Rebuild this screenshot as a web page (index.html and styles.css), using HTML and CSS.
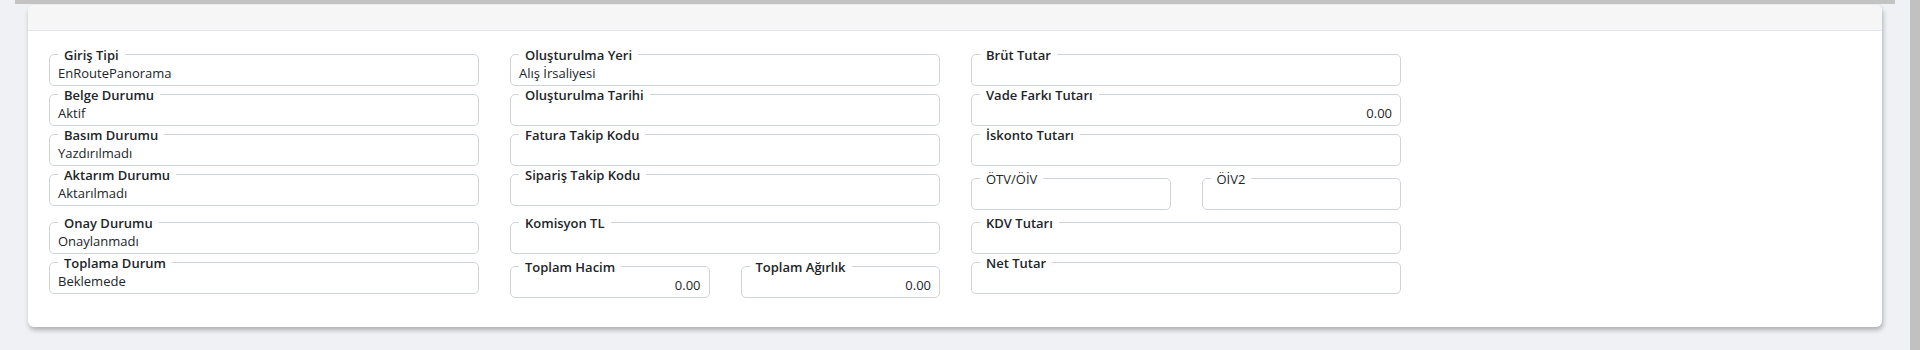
FILE: index.html
```html
<!DOCTYPE html>
<html>
<head>
  <title>Belge Bilgileri</title>
  <link rel="stylesheet" href="styles.css">
</head>
<body>
  <div class="page">
    <div class="top-bar"></div>

    <div class="card">
      <div class="card-header"></div>
      <div class="card-body">
        <div class="form-grid">
          <!-- row 1 -->
          <fieldset class="field"><legend>Giriş Tipi</legend><div class="value">EnRoutePanorama</div></fieldset>
          <fieldset class="field"><legend>Oluşturulma Yeri</legend><div class="value">Alış İrsaliyesi</div></fieldset>
          <fieldset class="field"><legend>Brüt Tutar</legend><div class="value"></div></fieldset>

          <!-- row 2 -->
          <fieldset class="field"><legend>Belge Durumu</legend><div class="value">Aktif</div></fieldset>
          <fieldset class="field"><legend>Oluşturulma Tarihi</legend><div class="value"></div></fieldset>
          <fieldset class="field"><legend>Vade Farkı Tutarı</legend><div class="value number">0.00</div></fieldset>

          <!-- row 3 -->
          <fieldset class="field"><legend>Basım Durumu</legend><div class="value">Yazdırılmadı</div></fieldset>
          <fieldset class="field"><legend>Fatura Takip Kodu</legend><div class="value"></div></fieldset>
          <fieldset class="field"><legend>İskonto Tutarı</legend><div class="value"></div></fieldset>

          <!-- row 4 -->
          <fieldset class="field"><legend>Aktarım Durumu</legend><div class="value">Aktarılmadı</div></fieldset>
          <fieldset class="field"><legend>Sipariş Takip Kodu</legend><div class="value"></div></fieldset>
          <div class="split">
            <fieldset class="field"><legend class="plain">ÖTV/ÖİV</legend><div class="value"></div></fieldset>
            <fieldset class="field"><legend class="plain">ÖİV2</legend><div class="value"></div></fieldset>
          </div>

          <!-- row 5 -->
          <fieldset class="field"><legend>Onay Durumu</legend><div class="value">Onaylanmadı</div></fieldset>
          <fieldset class="field"><legend>Komisyon TL</legend><div class="value"></div></fieldset>
          <fieldset class="field"><legend>KDV Tutarı</legend><div class="value"></div></fieldset>

          <!-- row 6 -->
          <fieldset class="field"><legend>Toplama Durum</legend><div class="value">Beklemede</div></fieldset>
          <div class="split">
            <fieldset class="field"><legend>Toplam Hacim</legend><div class="value number">0.00</div></fieldset>
            <fieldset class="field"><legend>Toplam Ağırlık</legend><div class="value number">0.00</div></fieldset>
          </div>
          <fieldset class="field"><legend>Net Tutar</legend><div class="value"></div></fieldset>
        </div>
      </div>
    </div>
  </div>

  <div class="scroll-strip"></div>
</body>
</html>
```

FILE: styles.css
```css
html, body {
  height: 100%;
}

body {
  margin: 0;
  display: flex;
  font-family: "Open Sans", "Noto Sans", sans-serif;
  font-size: 13px;
  color: #212529;
  background-color: #f0f1f5;
}

.page {
  flex: 1;
  min-width: 0;
}

.top-bar {
  height: 4px;
  margin: 0 15px;
  background-color: #c3c3c3;
}

.scroll-strip {
  width: 10px;
  background-color: #c1c1c1;
}

.card {
  margin: 1px 28px 0 28px;
  background-color: #fff;
  border-radius: 6px;
  box-shadow: 1px 3px 5px rgba(0, 0, 0, 0.28);
  overflow: hidden;
}

.card-header {
  height: 25px;
  background-color: #f6f6f6;
  border-bottom: 1px solid #e5e5ee;
}

.card-body {
  padding: 15px 21px 25px 21px;
}

.form-grid {
  display: grid;
  grid-template-columns: 430px 430px 430px;
  column-gap: 31px;
  align-items: start;
}

.split {
  display: grid;
  grid-template-columns: 1fr 1fr;
  column-gap: 31px;
  padding: 4px 0;
}

.field {
  margin: 0;
  min-width: 0;
  padding: 0 8px 2px 8px;
  border: 1px solid #ced4da;
  border-radius: 5px;
}

.field legend {
  padding: 3px 6px 0 6px;
  font-weight: 600;
  line-height: 13px;
  color: #212529;
}

.field legend.plain {
  font-weight: 500;
}

.value {
  height: 20px;
  margin-top: 1px;
  line-height: 20px;
  white-space: nowrap;
}

.value.number {
  text-align: right;
}
```
